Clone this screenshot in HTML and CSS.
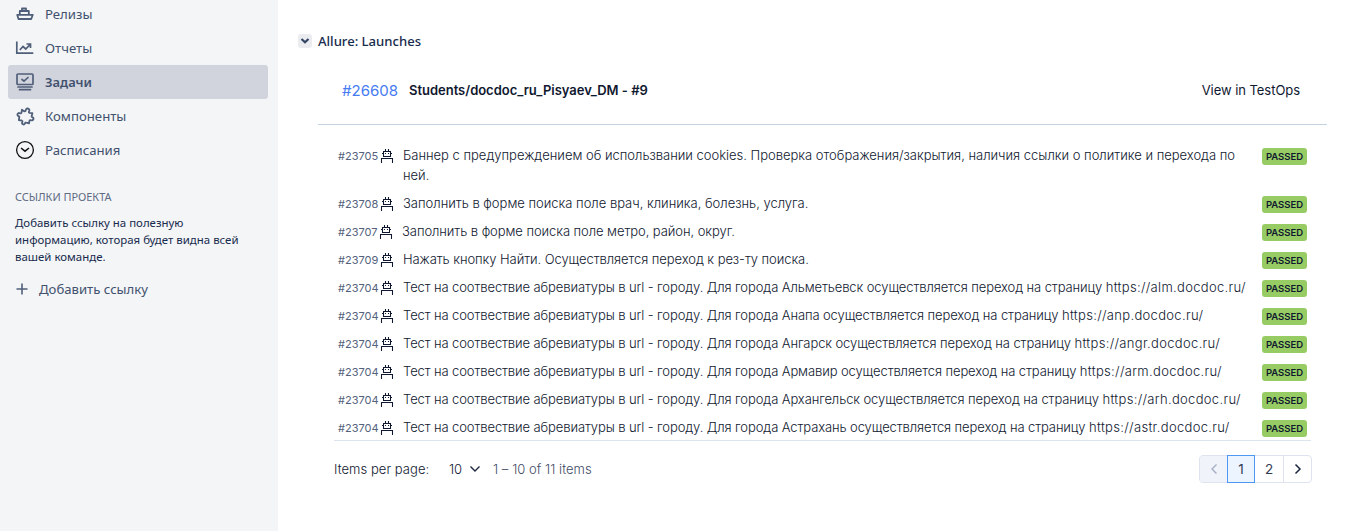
FILE: index.html
```html
<!DOCTYPE html>
<html lang="ru">
<head>
<meta charset="utf-8">
<title>Allure: Launches</title>
<link rel="stylesheet" href="styles.css">
</head>
<body>
<svg width="0" height="0" class="sprite">
  <symbol id="robot" viewBox="0 0 14 15"><path d="M5.500 0v2M8.500 0v2M3.500 2.500h7v5h-7zM2 4.500h1M11 4.500h1M5.500 4v1M8.500 4v1M1.500 14v-4.500h11V14" fill="none" stroke="#10182f" stroke-width="1.050"/></symbol>
</svg>
<div class="app">
  <aside class="sidebar">
    <nav class="nav">
      <a class="nav-item"><svg class="nav-icon" viewBox="0 0 20 20"><path d="M4.800 10.500V7h9v3.500M7 7V4.500h4V7M2.200 10.800h15.600l-1.600 4.200H3.500z" fill="none" stroke="#505f79" stroke-width="1.800" stroke-linejoin="round"/></svg><span>Релизы</span></a>
      <a class="nav-item"><svg class="nav-icon" viewBox="0 0 20 20"><path d="M1.800 3.500v11.700h16.500M4.800 12l3.200-3.500 2.800 2.500 4.200-4.500M11.500 6H15.500v4" fill="none" stroke="#505f79" stroke-width="1.700"/></svg><span>Отчеты</span></a>
      <a class="nav-item nav-item--active"><svg class="nav-icon" viewBox="0 0 20 20"><path d="M3 2h14q1 0 1 1v8.500q0 1-1 1H3q-1 0-1-1V3q0-1 1-1zM7 7.500l2 1.700 4-3.700M3 15h14M4.500 17.700h11" fill="none" stroke="#505f79" stroke-width="1.700" stroke-linecap="round"/></svg><span>Задачи</span></a>
      <a class="nav-item"><svg class="nav-icon" viewBox="0 0 20 20"><path d="M5 5.200L8 6Q9.200 5.500 8.700 4.200 8.800 2.200 10.700 2.200 12.600 2.500 12.300 4.300 12 5.700 13.200 5.800L16 5.200 16.300 8Q16.200 9.300 17.500 9.100 19 9.300 18.800 11 18.500 12.500 17 12.300 15.600 12.200 15.600 13.300L16 16 13.300 16.100Q12 16 12.200 17.200 11.900 18.900 10.400 18.700 8.900 18.400 9.200 16.800 9.300 15.600 8.100 15.500L5.300 16 4.800 13.300Q4.900 12.100 3.700 12.300 2 12 2.200 10.400 2.500 8.900 4 9.200 5.500 9.300 5.500 8.100z" transform="rotate(18 10.500 10.500)" fill="none" stroke="#505f79" stroke-width="1.800" stroke-linejoin="round"/></svg><span>Компоненты</span></a>
      <a class="nav-item"><svg class="nav-icon" viewBox="0 0 20 20"><circle cx="10" cy="10" r="8.400" fill="none" stroke="#111" stroke-width="1.300"/><path d="M6 8l4 3.200L14 8" fill="none" stroke="#111" stroke-width="1.500"/></svg><span>Расписания</span></a>
    </nav>
    <section class="links">
      <h2 class="links-title">Ссылки проекта</h2>
      <p class="links-text">Добавить ссылку на полезную<br>информацию, которая будет видна всей<br>вашей команде.</p>
      <a class="links-add"><svg width="12" height="12" viewBox="0 0 12 12"><path d="M6 .5v11M.5 6h11" stroke="#505f79" stroke-width="1.600"/></svg><span>Добавить ссылку</span></a>
    </section>
  </aside>
  <main class="main">
    <header class="panel-head"><button class="toggle"><svg width="14" height="14" viewBox="0 0 14 14"><path d="M3.500 5L7 8.300 10.500 5" fill="none" stroke="#344563" stroke-width="2.200"/></svg></button><span>Allure: Launches</span></header>
    <div class="launch">
      <span class="launch-id">#26608</span>
      <span class="launch-name">Students/docdoc_ru_Pisyaev_DM - #9</span>
      <a class="launch-link">View in TestOps</a>
    </div>
    <div class="results">
      <div class="row"><span class="id">#23705</span><svg class="robot"><use href="#robot"/></svg><span class="name name--wide">Баннер с предупреждением об использвании cookies. Проверка отображения/закрытия, наличия ссылки о политике и перехода по<br>ней.</span><span class="badge">PASSED</span></div>
      <div class="row"><span class="id">#23708</span><svg class="robot"><use href="#robot"/></svg><span class="name name--wide">Заполнить в форме поиска поле врач, клиника, болезнь, услуга.</span><span class="badge">PASSED</span></div>
      <div class="row"><span class="id id--narrow">#23707</span><svg class="robot"><use href="#robot"/></svg><span class="name">Заполнить в форме поиска поле метро, район, округ.</span><span class="badge">PASSED</span></div>
      <div class="row"><span class="id">#23709</span><svg class="robot"><use href="#robot"/></svg><span class="name">Нажать кнопку Найти. Осуществляется переход к рез-ту поиска.</span><span class="badge">PASSED</span></div>
      <div class="row"><span class="id">#23704</span><svg class="robot"><use href="#robot"/></svg><span class="name name--tight">Тест на соотвествие абревиатуры в url - городу. Для города Альметьевск осуществляется переход на страницу <span class="url">https://alm.docdoc.ru/</span></span><span class="badge">PASSED</span></div>
      <div class="row"><span class="id">#23704</span><svg class="robot"><use href="#robot"/></svg><span class="name name--tight">Тест на соотвествие абревиатуры в url - городу. Для города Анапа осуществляется переход на страницу <span class="url">https://anp.docdoc.ru/</span></span><span class="badge">PASSED</span></div>
      <div class="row"><span class="id">#23704</span><svg class="robot"><use href="#robot"/></svg><span class="name name--tight">Тест на соотвествие абревиатуры в url - городу. Для города Ангарск осуществляется переход на страницу <span class="url">https://angr.docdoc.ru/</span></span><span class="badge">PASSED</span></div>
      <div class="row"><span class="id">#23704</span><svg class="robot"><use href="#robot"/></svg><span class="name name--tight">Тест на соотвествие абревиатуры в url - городу. Для города Армавир осуществляется переход на страницу <span class="url">https://arm.docdoc.ru/</span></span><span class="badge">PASSED</span></div>
      <div class="row"><span class="id">#23704</span><svg class="robot"><use href="#robot"/></svg><span class="name name--tight">Тест на соотвествие абревиатуры в url - городу. Для города Архангельск осуществляется переход на страницу <span class="url">https://arh.docdoc.ru/</span></span><span class="badge">PASSED</span></div>
      <div class="row"><span class="id">#23704</span><svg class="robot"><use href="#robot"/></svg><span class="name name--tight">Тест на соотвествие абревиатуры в url - городу. Для города Астрахань осуществляется переход на страницу <span class="url">https://astr.docdoc.ru/</span></span><span class="badge">PASSED</span></div>
    </div>
    <footer class="pager">
      <span class="pager-label">Items per page:</span>
      <span class="pager-size">10</span>
      <svg class="pager-caret" width="12" height="8" viewBox="0 0 12 8"><path d="M1.500 1.500L6 6l4.500-4.500" fill="none" stroke="#1d2840" stroke-width="1.400"/></svg>
      <span class="pager-range">1 – 10 of 11 items</span>
      <div class="pages">
        <span class="page page--off"><svg width="8" height="12" viewBox="0 0 8 12"><path d="M6.500 1.500L2 6l4.500 4.500" fill="none" stroke="#a5afc4" stroke-width="1.400"/></svg></span>
        <span class="page page--current">1</span>
        <span class="page">2</span>
        <span class="page"><svg width="8" height="12" viewBox="0 0 8 12"><path d="M1.500 1.500L6 6l-4.500 4.500" fill="none" stroke="#1d2840" stroke-width="1.500"/></svg></span>
      </div>
    </footer>
  </main>
</div>
</body>
</html>
```

FILE: styles.css
```css
* { box-sizing: border-box; }
body { margin: 0; background: #fff; }
.sprite { display: block; }
.app { display: flex; height: 531px; overflow: hidden; }

.sidebar { width: 278px; flex: none; padding: 0 10px 0 8px; background: #f4f5f7; color: #42526e; font-family: "Noto Sans", "Open Sans", sans-serif; }
.nav { margin-top: -3px; }
.nav-item { display: flex; align-items: center; gap: 10px; height: 34px; padding-left: 7px; border-radius: 3px; font-size: 13.200px; }
.nav-item span { padding-bottom: 1px; }
.nav-item--active { background: #d1d3dd; font-weight: 600; font-size: 12.900px; }
.nav-icon { width: 20px; height: 20px; flex: none; }
.links { padding: 22px 0 0 7px; }
.links-title { margin: 0; font-size: 10.900px; line-height: 16px; font-weight: 400; text-transform: uppercase; color: #5e6c84; }
.links-text { margin: 9px 0 0; font-size: 11.440px; line-height: 17px; color: #172b4d; white-space: nowrap; }
.links-add { display: flex; align-items: center; gap: 12px; margin-top: 14px; padding-left: 1px; line-height: 20px; font-size: 13.150px; }
.links-add span { margin-left: -1px; }

.main { flex: 1; padding: 31px 41px 0 20px; font-family: Inter, Roboto, sans-serif; color: #10182f; }
.panel-head { display: flex; align-items: center; gap: 6px; height: 20px; font: 500 13.100px "Noto Sans", sans-serif; color: #172b4d; }
.toggle { display: flex; width: 14px; height: 14px; padding: 0; border: 0; border-radius: 3px; background: #ebecf0; }
.launch { display: flex; align-items: center; height: 74px; margin-left: 20px; padding: 5px 27px 0 24px; border-bottom: 1px solid #c5d3e0; }
.launch-id { font-size: 15px; color: #467bf2; width: 67px; }
.launch-name { font-size: 13px; font-weight: 600; letter-spacing: -.02px; }
.launch-link { margin-left: auto; font-size: 13px; letter-spacing: -.05px; }
.results { margin: 16px 16px 0 36px; border-bottom: 1px solid #dce4ed; }
.row { display: flex; align-items: flex-start; min-height: 28px; padding: 4px 4px 4px 4px; font-size: 13px; line-height: 20px; }
.row:last-child { height: 27px; min-height: 0; }
.id { width: 42px; font-size: 11px; color: #54627c; line-height: 18px; padding-top: 2px; }
.id--narrow { width: 41px; }
.robot { width: 14px; height: 15px; margin: 4px 9px 0 0; flex: none; }
.name { font-weight: 300; letter-spacing: -.07px; white-space: nowrap; }
.name--wide { letter-spacing: -.01px; }
.name--tight { letter-spacing: -.100px; }
.url { letter-spacing: .32px; }
.badge { margin: 3px 0 0 auto; width: 45px; height: 17px; border-radius: 3px; background: #97cc64; font-size: 9.500px; font-weight: 600; line-height: 17px; text-align: center; color: #10182f; }
.pager { display: flex; align-items: center; height: 28px; margin: 14px 15px 0 36px; font-size: 13px; font-weight: 300; }
.pager-label { width: 115px; letter-spacing: .05px; }
.pager-size { width: 20px; }
.pager-caret { margin-right: 12px; }
.pager-range { color: #3f4c66; letter-spacing: .05px; }
.pages { display: flex; margin-left: auto; height: 28px; border: 1px solid #dde3ef; border-radius: 4px; }
.page { display: flex; align-items: center; justify-content: center; width: 28px; font-size: 13.500px; font-weight: 400; color: #303b54; }
.page--off { width: 27px; background: #f0f3f9; border-radius: 3px 0 0 3px; }
.page--current { margin: -1px 0; border: 1px solid #4e97f5; background: #ecf4ff; }
.page:last-child { border-left: 1px solid #dde3ef; }
```
